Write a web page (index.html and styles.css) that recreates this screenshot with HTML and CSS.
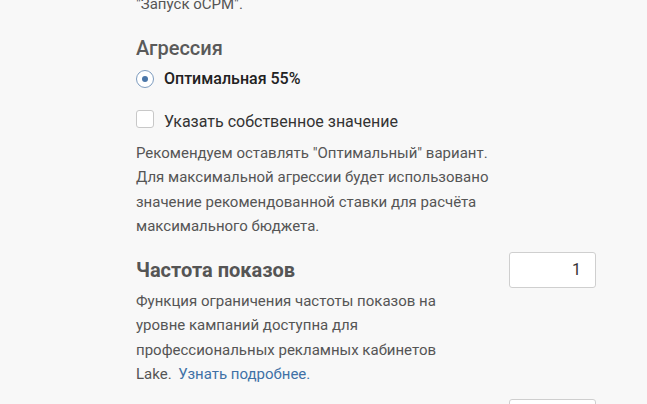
FILE: index.html
```html
<!DOCTYPE html>
<html lang="ru">
<head>
    <meta charset="UTF-8">
    <meta name="viewport" content="width=device-width, initial-scale=1.0">
    <title>Настройки кампании</title>
    <link rel="stylesheet" href="styles.css">
</head>
<body>
    <div class="settings">
        <p class="hint hint-top">"Запуск oCPM".</p>

        <h2 class="section-title">Агрессия</h2>
        <label class="radio-row">
            <span class="radio checked"></span>
            <span class="radio-label">Оптимальная 55%</span>
        </label>
        <label class="check-row">
            <span class="checkbox"></span>
            <span class="check-label">Указать собственное значение</span>
        </label>
        <p class="hint hint-wide">Рекомендуем оставлять "Оптимальный" вариант. Для максимальной агрессии будет использовано значение рекомендованной ставки для расчёта максимального бюджета.</p>

        <div class="field-row">
            <div class="field-info">
                <h2 class="section-title field-title">Частота показов</h2>
                <p class="hint hint-narrow">Функция ограничения частоты показов на уровне кампаний доступна для профессиональных рекламных кабинетов Lake. <a href="#" class="more-link">Узнать подробнее.</a></p>
            </div>
            <input type="text" class="num-input" value="1">
        </div>

        <div class="field-row">
            <div class="field-info"></div>
            <input type="text" class="num-input" value="">
        </div>
    </div>
</body>
</html>
```

FILE: styles.css
```css
body {
    margin: 0;
    padding: 0;
    background-color: #f8f8f8;
    font-family: Roboto, "Noto Sans", Arial, sans-serif;
    color: #555;
    overflow: hidden;
}

.settings {
    padding-left: 136px;
    width: 460px;
}

.hint {
    margin: 0;
    font-size: 15px;
    line-height: 24.5px;
    color: #555;
}

.hint-top {
    margin-top: -8px;
}

.hint-wide {
    max-width: 362px;
    margin-top: 10px;
}

.hint-narrow {
    width: 312px;
    margin-top: 7px;
}

.section-title {
    margin: 19px 0 0;
    font-size: 20px;
    line-height: 24px;
    font-weight: 500;
    color: #5a5a5a;
}

.radio-row {
    display: flex;
    align-items: center;
    height: 24px;
    margin-top: 7px;
}

.radio {
    width: 18px;
    height: 18px;
    box-sizing: border-box;
    border: 1px solid #7d9cbf;
    border-radius: 50%;
    display: flex;
    align-items: center;
    justify-content: center;
    background-color: #fff;
}

.radio.checked::after {
    content: "";
    width: 6px;
    height: 6px;
    border-radius: 50%;
    background-color: #4a76a8;
}

.radio-label {
    margin-left: 10px;
    font-size: 16px;
    line-height: 24px;
    font-weight: 500;
    color: #222;
}

.check-row {
    display: flex;
    align-items: flex-start;
    margin-top: 19px;
}

.checkbox {
    width: 18px;
    height: 18px;
    box-sizing: border-box;
    border: 1px solid #c8c8c8;
    border-radius: 3px;
    background-color: #fff;
}

.check-label {
    margin-left: 10px;
    margin-top: 3px;
    font-size: 16px;
    line-height: 18px;
    color: #333;
}

.field-row {
    display: flex;
    justify-content: space-between;
    align-items: flex-start;
    margin-top: 13px;
}

.field-title {
    margin-top: 6px;
    font-weight: 700;
    color: #555;
}

.more-link {
    margin-left: 3px;
    color: #3f71a6;
    text-decoration: none;
}

.num-input {
    width: 87px;
    height: 36px;
    box-sizing: border-box;
    border: 1px solid #cfcfcf;
    border-radius: 3px;
    background-color: #fff;
    padding: 0 14px;
    text-align: right;
    font-family: Roboto, Arial, sans-serif;
    font-size: 16px;
    color: #333;
}

.field-row + .field-row {
    margin-top: 12px;
}
```
